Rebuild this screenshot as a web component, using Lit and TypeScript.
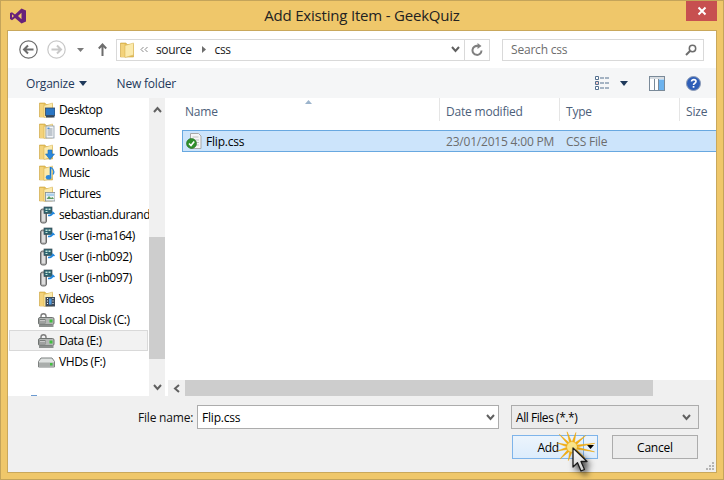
import { LitElement, html, css, svg } from 'lit';
import { customElement } from 'lit/decorators.js';

// shared folder shape, 16x16, the overlay is drawn on top of it
const folder = (overlay: unknown = '') => html`<svg class="ico" width="16" height="16" viewBox="0 0 16 16">
  <path d="M.5 1h5.500l1 1.500h6.500v12.500H.5z" fill="#e6c05a" stroke="#cda440" stroke-width=".6"/>
  <path d="M5 3.500 13.500 1v12L5 15.500z" fill="#fbeaac" stroke="#dcbb62" stroke-width=".6"/>
  <path d="M1 2h3.500v13H1z" fill="#f3d27a"/>
  ${overlay}
</svg>`;

const desktopOv = svg`<rect x="6.500" y="6" width="9.500" height="7.500" fill="#2a76c4" stroke="#33475f" stroke-width=".8"/><rect x="7" y="13.500" width="8.500" height="2" fill="#33475f"/>`;
const docOv = svg`<rect x="7" y="3" width="8" height="12" fill="#f4f6f8" stroke="#8b98a5" stroke-width=".8"/><path d="M8.500 6h5M8.500 8h5M8.500 10h5M8.500 12h5" stroke="#8b98a5"/><rect x="8.500" y="4.500" width="2" height="1.500" fill="#4a90d9"/>`;
const downOv = svg`<path d="M9 6h4v4h2.500L11 15.500 6.500 10H9z" fill="#2b88dc" stroke="#1c6bb5" stroke-width=".6"/>`;
const musicOv = svg`<path d="M11.500 2v9.500" stroke="#1c78cc" stroke-width="1.600"/><ellipse cx="9.600" cy="12.300" rx="2.800" ry="2.300" fill="#2b88dc"/><path d="M12 2.500c3 2 3.500 4.500 2 7" fill="none" stroke="#2b88dc" stroke-width="1.300"/>`;
const picOv = svg`<rect x="6.500" y="6.500" width="9.500" height="8.500" fill="#eef3f4" stroke="#7f8c93" stroke-width=".8"/><path d="M7.500 13 10 10l2 2 1.500-1 1.500 2z" fill="#5f9c62"/><rect x="7.500" y="7.500" width="7.500" height="2.500" fill="#a9d0ee"/>`;
const filmOv = svg`<rect x="6.500" y="6" width="9.500" height="9.500" fill="#3c4a5a"/><path d="M8 7h1v1H8zM8 9.500h1v1H8zM8 12h1v1H8zM13.500 7h1v1h-1zM13.500 9.500h1v1h-1zM13.500 12h1v1h-1z" fill="#fff"/><rect x="10" y="7.500" width="2.600" height="6" fill="#4f9be0"/>`;

const netDrive = html`<svg class="ico" width="16" height="18" viewBox="0 0 16 18">
  <rect x="1.500" y="3" width="6" height="14" rx="2" fill="#a9a9a9" stroke="#6a6a6a"/>
  <rect x="3" y="4.500" width="3" height="11" fill="#dedede"/>
  <rect x="5" y="1" width="8" height="6.500" fill="#2c6470" stroke="#3e4f58" stroke-width=".7"/>
  <path d="M6.500 2.500h2v1.500h-2zM9.500 2.500h2v1.500h-2zM6.500 5h2v1h-2z" fill="#c3e4d8"/>
  <path d="M9 9.500c3 0 4.500-.5 5-3l1.500 1.500M14 6.500 12.500 8" fill="none" stroke="#1f86dc" stroke-width="1.500"/>
</svg>`;

const lockDisk = html`<svg class="ico disk" width="17" height="16" viewBox="0 0 17 16">
  <path d="M3 6V4c0-3 5-3 5 0v1" fill="none" stroke="#7d7d7d" stroke-width="1.400"/>
  <rect x=".5" y="5.500" width="15.500" height="7" rx="1.500" fill="#b4b7b5" stroke="#6f7371"/>
  <rect x="1" y="12.500" width="14.500" height="2.500" fill="#8d918f"/>
  <rect x="1.500" y="7" width="6" height="4.500" fill="#797d7b"/>
  <path d="M2 8.500h5M2 10h5" stroke="#c8c8c8"/>
  <rect x="11.500" y="7.500" width="3" height="3" fill="#3fbf3f"/>
</svg>`;

const plainDisk = html`<svg class="ico disk" width="17" height="16" viewBox="0 0 17 16">
  <path d="M3 4h11l2.500 3.500v5.500H.5V7.500z" fill="#dfe2e1" stroke="#7d8180"/>
  <rect x="1" y="8.500" width="15" height="4" fill="#a9adab"/>
  <rect x="12" y="9" width="2.500" height="2.500" fill="#3fbf3f"/>
</svg>`;

type NavRow = { label: string; icon: unknown; selected?: boolean };

const navRows: NavRow[] = [
  { label: 'Desktop', icon: folder(desktopOv) },
  { label: 'Documents', icon: folder(docOv) },
  { label: 'Downloads', icon: folder(downOv) },
  { label: 'Music', icon: folder(musicOv) },
  { label: 'Pictures', icon: folder(picOv) },
  { label: 'sebastian.durand', icon: netDrive },
  { label: 'User (i-ma164)', icon: netDrive },
  { label: 'User (i-nb092)', icon: netDrive },
  { label: 'User (i-nb097)', icon: netDrive },
  { label: 'Videos', icon: folder(filmOv) },
  { label: 'Local Disk (C:)', icon: lockDisk },
  { label: 'Data (E:)', icon: lockDisk, selected: true },
  { label: 'VHDs (F:)', icon: plainDisk },
];

const chevron = (d: string) => html`<svg width="9" height="7" viewBox="0 0 9 7"><path d=${d} fill="none" stroke="#606060" stroke-width="2"/></svg>`;
const CHEV_UP = 'M1 6 4.500 2 8 6';
const CHEV_DOWN = 'M1 1 4.500 5 8 1';

const caret = html`<svg width="8" height="5" viewBox="0 0 8 5"><path d="M0 0h8L4 5z" fill="#1e395b"/></svg>`;

// star burst behind the pointer, long spikes left and right
const burst = () => {
  const tips: [number, number][] = [
    [-9, 23], [12, 23], [40, 17], [70, 15], [105, 14], [135, 17],
    [165, 15], [195, 15], [225, 18], [252, 16], [285, 15], [320, 18],
  ];
  const pts: string[] = [];
  tips.forEach(([deg, r], i) => {
    const next = tips[(i + 1) % tips.length][0];
    const mid = ((i === tips.length - 1 ? next + 360 : next) + deg) / 2;
    for (const [d, rr] of [[deg, r], [mid, 4.5]]) {
      const a = (d * Math.PI) / 180;
      pts.push(`${(24 + Math.cos(a) * rr).toFixed(1)},${(18 + Math.sin(a) * rr).toFixed(1)}`);
    }
  });
  return html`<svg class="burst" width="48" height="36" viewBox="0 0 48 36">
    <polygon points=${pts.join(' ')} fill="#f2ae14" stroke="#eba509" stroke-width=".5"/>
    <circle cx="24" cy="18" r="5" fill="#f9e488"/>
  </svg>`;
};

@customElement('app-root')
export class AppRoot extends LitElement {
  static styles = css`
    :host {
      display: block;
      width: 724px;
      height: 480px;
      box-sizing: border-box;
      position: relative;
      overflow: hidden;
      background: #efc76a;
      border: 1px solid #c4a45a;
      font-family: "Open Sans", "Noto Sans", sans-serif;
      font-size: 12px;
      letter-spacing: -0.2px;
      color: #000;
    }
    * { box-sizing: border-box; }
    svg { display: block; flex: none; }

    .titlebar {
      height: 29px;
      display: grid;
      grid-template-columns: 1fr auto 1fr;
      align-items: start;
    }
    .logo { margin: 7px 0 0 9px; }
    .title { font-size: 15px; line-height: 28px; color: #222; letter-spacing: -0.2px; }
    .close {
      justify-self: end;
      width: 31px;
      height: 20px;
      margin-right: 6px;
      background: #c75050;
      display: flex;
      align-items: center;
      justify-content: center;
    }

    .dialog {
      margin: 0 6px;
      height: 443px;
      border: 1px solid #c9a85c;
      display: flex;
      flex-direction: column;
      background: #fff;
    }

    .nav {
      height: 37px;
      flex: none;
      display: flex;
      align-items: center;
      padding-left: 11px;
    }
    .nav .fwd { margin-left: 9px; }
    .nav .drop { margin-left: 11px; }
    .nav .up { margin-left: 14px; }
    .address {
      margin-left: 9px;
      width: 374px;
      height: 22px;
      border: 1px solid #d9d9d9;
      display: flex;
      align-items: center;
      padding-left: 3px;
      color: #1a1a1a;
      letter-spacing: -0.35px;
    }
    .address .ellipsis { margin-left: 4px; }
    .address .source { margin-left: 8px; }
    .address .sep { margin-left: 10px; }
    .address .css { margin-left: 9px; }
    .address .tail { margin-left: auto; height: 100%; display: flex; align-items: center; gap: 4px; }
    .address .refresh { width: 25px; height: 100%; border-left: 1px solid #d9d9d9; display: flex; align-items: center; justify-content: center; }
    .search {
      margin-left: 12px;
      width: 202px;
      height: 22px;
      border: 1px solid #d9d9d9;
      display: flex;
      align-items: center;
      justify-content: space-between;
      padding: 0 6px 0 8px;
      color: #6d6d6d;
    }

    .toolbar {
      height: 30px;
      flex: none;
      background: #f5f6f7;
      display: flex;
      align-items: center;
      padding-left: 18px;
      color: #1e395b;
    }
    .toolbar .organize { display: flex; align-items: center; gap: 4px; }
    .toolbar .newfolder { margin-left: 30px; }
    .toolbar .views { margin-left: auto; display: flex; align-items: center; }
    .toolbar .views .caret { margin-left: 10px; }
    .toolbar .views .pane { margin-left: 21px; }
    .toolbar .views .help { margin-left: 21px; margin-right: 15px; }

    .middle { height: 298px; flex: none; display: flex; }
    .tree { width: 141px; flex: none; overflow: hidden; padding-top: 1px; letter-spacing: -0.4px; }
    .row {
      height: 21px;
      margin: 0 1px;
      display: grid;
      grid-template-columns: 21px 1fr;
      align-items: center;
      padding-left: 28px;
      white-space: nowrap;
      border: 1px solid transparent;
    }
    .row.selected { background: #f2f2f2; border-color: #d9d9d9; }
    .row .ico { margin-left: 1px; }
    .row .ico.disk { margin-left: 0; }
    .network { margin: 23px 0 0 23px; width: 6px; height: 2px; background: #6b9ad0; }

    .vscroll {
      width: 16px;
      flex: none;
      background: #f0f0f0;
      display: flex;
      flex-direction: column;
      align-items: center;
    }
    .vscroll .arrow { height: 17px; display: flex; align-items: center; }
    .vscroll .up-a { margin-top: 3px; }
    .vscroll .thumb { width: 100%; height: 122px; margin-top: 119px; background: #cdcdcd; }
    .vscroll .down-a { margin-top: auto; }

    .files { flex: 1; min-width: 0; display: flex; flex-direction: column; margin-left: 3px; position: relative; }
    .header { height: 32px; flex: none; display: grid; grid-template-columns: 271px 120px 120px 1fr; color: #4c607a; }
    .header div { height: 23px; padding-top: 5px; line-height: 18px; padding-left: 6px; border-left: 1px solid #e5e5e5; }
    .header div:first-child { border-left: 0; padding-left: 17px; }
    .sort { position: absolute; left: 137px; top: 2px; }
    .file {
      height: 22px;
      flex: none;
      margin-left: 14px;
      background: #cce4fb;
      border: 1px solid #68a8e0;
      border-right: 0;
      display: grid;
      grid-template-columns: 256px 120px 120px;
      align-items: center;
      color: #6d6d6d;
    }
    .file .name { display: flex; align-items: center; gap: 4px; padding-left: 3px; color: #000; }
    .file .cell { padding-left: 7px; }
    .spacer { flex: 1; }
    .hscroll { height: 16px; flex: none; background: #f0f0f0; display: flex; align-items: center; }
    .hscroll .arrow { width: 17px; display: flex; justify-content: center; }
    .hscroll .thumb { width: 468px; height: 100%; background: #cdcdcd; }

    .footer {
      flex: 1;
      background: #f0f0f0;
      padding-top: 9px;
      display: flex;
      flex-direction: column;
      gap: 6px;
      position: relative;
    }
    .fields { display: flex; height: 24px; align-items: center; padding-left: 130px; }
    .fields label { width: 59px; color: #111; }
    .input {
      width: 302px;
      height: 24px;
      background: #fff;
      border: 1px solid #acacac;
      display: flex;
      align-items: center;
      justify-content: space-between;
      padding: 0 3px 0 4px;
    }
    .select {
      margin-left: 12px;
      width: 188px;
      height: 24px;
      background: #ececec;
      border: 1px solid #acacac;
      display: flex;
      align-items: center;
      justify-content: space-between;
      padding: 0 7px 0 4px;
      letter-spacing: -0.45px;
    }
    .actions { display: flex; justify-content: flex-end; gap: 14px; padding-right: 18px; }
    .btn {
      width: 86px;
      height: 24px;
      border: 1px solid #acacac;
      background: #ececec;
      display: flex;
      align-items: center;
      justify-content: center;
    }
    .btn.add {
      border-color: #7eb4ea;
      background: linear-gradient(#ecf4fc, #dcecfc);
      justify-content: flex-start;
    }
    .btn.add .main { width: 71px; text-align: center; letter-spacing: -0.4px; }
    .btn.add .split { width: 14px; height: 100%; border-left: 1px solid #7eb4ea; display: flex; align-items: center; justify-content: center; }
    .grip { position: absolute; right: 1px; bottom: 1px; }

    .pointer { position: absolute; left: 547px; top: 428px; }
    .burst { position: absolute; left: 0; top: 0; }
    .cursor { position: absolute; left: 24px; top: 18px; filter: drop-shadow(3px 4px 3px rgba(0, 0, 0, .7)); }
  `;

  render() {
    return html`
      <div class="titlebar">
        <svg class="logo" width="16" height="16" viewBox="0 0 16 16">
          <path d="M11.500.5 16 2.500v11l-4.500 2-6.500-5.500-3 2.300L0 11V5l2-.8 3 2.300zM11.500 4.800 8 8l3.500 3.200zM2 6.200v3.600L4 8z" fill="#68217a" fill-rule="evenodd"/>
        </svg>
        <div class="title">Add Existing Item - GeekQuiz</div>
        <div class="close">
          <svg width="10" height="10" viewBox="0 0 10 10"><path d="M1.500 1.500l7 7M8.500 1.500l-7 7" stroke="#fff" stroke-width="2"/></svg>
        </div>
      </div>

      <div class="dialog">
        <div class="nav">
          <svg width="19" height="19" viewBox="0 0 19 19">
            <circle cx="9.500" cy="9.500" r="8.700" fill="#fff" stroke="#6d6d6d" stroke-width="1.200"/>
            <path d="M14.500 9.500h-9M9 5.500l-4 4 4 4" fill="none" stroke="#6d6d6d" stroke-width="2"/>
          </svg>
          <svg class="fwd" width="19" height="19" viewBox="0 0 19 19">
            <circle cx="9.500" cy="9.500" r="8.700" fill="#fff" stroke="#c8c8c8" stroke-width="1.200"/>
            <path d="M4.500 9.500h9M10 5.500l4 4-4 4" fill="none" stroke="#c8c8c8" stroke-width="2"/>
          </svg>
          <svg class="drop" width="7" height="4" viewBox="0 0 7 4"><path d="M0 0h7L3.500 4z" fill="#7a7a7a"/></svg>
          <svg class="up" width="9" height="13" viewBox="0 0 9 13"><path d="M4.500 13V2M.8 5.500 4.500 1.500l3.700 4" fill="none" stroke="#6d6d6d" stroke-width="2"/></svg>
          <div class="address">
            ${folder()}
            <svg class="ellipsis" width="8" height="7" viewBox="0 0 8 7"><path d="M3.500 1 1 3.500 3.500 6M7.500 1 5 3.500 7.500 6" fill="none" stroke="#8a8a8a"/></svg>
            <span class="source">source</span>
            <svg class="sep" width="4" height="7" viewBox="0 0 4 7"><path d="M0 0l4 3.500L0 7z" fill="#6d6d6d"/></svg>
            <span class="css">css</span>
            <div class="tail">
              ${chevron(CHEV_DOWN)}
              <div class="refresh">
                <svg width="12" height="13" viewBox="0 0 12 13"><path d="M10.500 7.500A4.500 4.500 0 1 1 7 3" fill="none" stroke="#808080" stroke-width="2"/><path d="M6.500 0 10.500 3 6.500 6z" fill="#808080"/></svg>
              </div>
            </div>
          </div>
          <div class="search">
            <span>Search css</span>
            <svg width="12" height="12" viewBox="0 0 12 12"><circle cx="7.500" cy="4.500" r="3.200" fill="none" stroke="#6d6d6d" stroke-width="1.500"/><path d="M5 7 1 11" stroke="#6d6d6d" stroke-width="2"/></svg>
          </div>
        </div>

        <div class="toolbar">
          <span class="organize">Organize ${caret}</span>
          <span class="newfolder">New folder</span>
          <div class="views">
            <svg width="15" height="14" viewBox="0 0 15 14">
              <path d="M.5.500h3v3h-3zM.500 5.500h3v3h-3zM.500 10.500h3v3h-3z" fill="#fff" stroke="#54708f"/>
              <rect x="1.500" y="6.500" width="1" height="1" fill="#d9342b"/>
              <path d="M5 2h4M10 2h4M5 7h4M10 7h4M5 12h4M10 12h4" stroke="#54708f"/>
            </svg>
            <span class="caret">${caret}</span>
            <svg class="pane" width="16" height="15" viewBox="0 0 16 15">
              <rect x=".5" y=".5" width="15" height="14" fill="#fff" stroke="#7a8a99"/>
              <rect x="1" y="1" width="14" height="2" fill="#d8dde2"/>
              <path d="M5.500 3v11M9.500 3v11" stroke="#7a8a99"/>
              <rect x="10" y="3.500" width="5" height="10.500" fill="#6db3ee"/>
            </svg>
            <svg class="help" width="15" height="15" viewBox="0 0 15 15">
              <circle cx="7.500" cy="7.500" r="7" fill="#2f5fb8" stroke="#8c9bb5"/>
              <path d="M5.500 5.500c.3-2.500 4.500-2.500 4.500 0 0 1.800-2.500 1.700-2.500 3.500" fill="none" stroke="#fff" stroke-width="1.600"/>
              <rect x="6.700" y="10" width="1.700" height="1.700" fill="#fff"/>
            </svg>
          </div>
        </div>

        <div class="middle">
          <div class="tree">
            ${navRows.map(r => html`<div class="row ${r.selected ? 'selected' : ''}">${r.icon}<span>${r.label}</span></div>`)}
            <div class="network"></div>
          </div>
          <div class="vscroll">
            <div class="arrow up-a">${chevron(CHEV_UP)}</div>
            <div class="thumb"></div>
            <div class="arrow down-a">${chevron(CHEV_DOWN)}</div>
          </div>
          <div class="files">
            <svg class="sort" width="7" height="4" viewBox="0 0 7 4"><path d="M3.500 0 7 4H0z" fill="#9cb4cc"/></svg>
            <div class="header">
              <div>Name</div><div>Date modified</div><div>Type</div><div>Size</div>
            </div>
            <div class="file">
              <div class="name">
                <svg width="16" height="16" viewBox="0 0 16 16">
                  <path d="M4.500.5h8l2.500 2.500v12.500H4.500z" fill="#f6f6f6" stroke="#a8a8a8"/>
                  <path d="M6.500 4h6M9 7h4M10 9.500h3M10 12h3" stroke="#c3c3c3"/>
                  <circle cx="5.500" cy="10.500" r="5" fill="#2f8f2b" stroke="#256f22" stroke-width=".6"/>
                  <path d="M3 10.500l2 2 3.200-4" fill="none" stroke="#fff" stroke-width="1.600"/>
                </svg>
                <span>Flip.css</span>
              </div>
              <div class="cell">23/01/2015 4:00 PM</div>
              <div class="cell">CSS File</div>
            </div>
            <div class="spacer"></div>
            <div class="hscroll">
              <div class="arrow"><svg width="7" height="9" viewBox="0 0 7 9"><path d="M6 1 2 4.500 6 8" fill="none" stroke="#606060" stroke-width="2"/></svg></div>
              <div class="thumb"></div>
            </div>
          </div>
        </div>

        <div class="footer">
          <div class="fields">
            <label>File name:</label>
            <div class="input"><span>Flip.css</span>${chevron(CHEV_DOWN)}</div>
            <div class="select"><span>All Files (*.*)</span>${chevron(CHEV_DOWN)}</div>
          </div>
          <div class="actions">
            <div class="btn add">
              <span class="main">Add</span>
              <span class="split"><svg width="7" height="4" viewBox="0 0 7 4"><path d="M0 0h7L3.500 4z" fill="#000"/></svg></span>
            </div>
            <div class="btn">Cancel</div>
          </div>
          <svg class="grip" width="10" height="10" viewBox="0 0 10 10"><path d="M7 1h2v2H7zM4 4h2v2H4zM7 4h2v2H7zM1 7h2v2H1zM4 7h2v2H4zM7 7h2v2H7z" fill="#b5b5b5"/></svg>
        </div>
      </div>

      <div class="pointer">
        ${burst()}
        <svg class="cursor" width="17" height="27" viewBox="0 0 17 27">
          <defs><linearGradient id="cg" x1="0" y1="0" x2="0" y2="1"><stop offset="0" stop-color="#fff"/><stop offset="1" stop-color="#cfcfcf"/></linearGradient></defs>
          <path d="M1 1v19l4.500-4.300 3.500 8.300 3.500-1.500-3.500-8h6z" fill="url(#cg)" stroke="#1a1a1a" stroke-width="1.300" stroke-linejoin="round"/>
        </svg>
      </div>
    `;
  }
}
